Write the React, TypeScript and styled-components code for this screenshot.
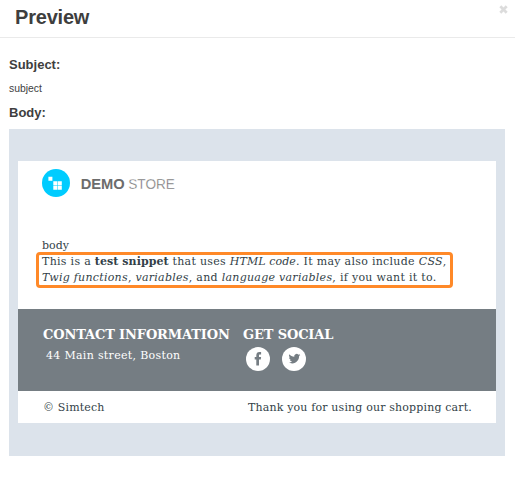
import React from "react";
import styled, { createGlobalStyle } from "styled-components";

const GlobalStyle = createGlobalStyle`
  * { box-sizing: border-box; }
  body { margin: 0; background: #fff; }
`;

const Dialog = styled.div`
  width: 515px;
  height: 485px;
  overflow: hidden;
  background: #fff;
  color: #3e3e3e;
  font-family: "Liberation Sans", Arial, sans-serif;
`;

const Header = styled.header`
  display: flex;
  justify-content: space-between;
  align-items: flex-start;
  height: 38px;
  padding: 5px 7px 0 15px;
  border-bottom: 1px solid #eaeaea;
`;

const Title = styled.h3`
  margin: 0;
  font-size: 20px;
  line-height: 24px;
  letter-spacing: -0.2px;
`;

const CloseButton = styled.button`
  display: flex;
  padding: 0;
  border: 0;
  background: none;
`;

const Content = styled.main`
  padding: 18px 10px 0 9px;
`;

const Label = styled.h4`
  margin: 0;
  font-size: 13px;
  line-height: 18px;
`;

const Subject = styled.p`
  margin: 6px 0 7px;
  font-size: 10.4px;
  line-height: 17px;
`;

const Canvas = styled.section`
  height: 327px;
  margin-top: 7px;
  padding: 32px 9px 0;
  background: #dce3eb;
`;

const Mail = styled.article`
  background: #fff;
  color: #333f48;
  font-family: "DejaVu Serif", serif;
  font-size: 11px;
  line-height: 16px;
  white-space: nowrap;
`;

const MailTop = styled.div`
  height: 148px;
  padding: 8px 0 0 18px;
`;

const Logo = styled.svg`
  display: block;
  margin-left: 6px;
`;

const BodyText = styled.p`
  margin: 41px 0 0;
  padding-left: 6px;
  line-height: 15px;
`;

const Highlight = styled.p`
  width: 417px;
  height: 36px;
  margin: -1px 0 0;
  padding: 0 3px;
  border: 3px solid #ff8928;
  border-radius: 4px;
  line-height: 16px;
  letter-spacing: 0.3px;
`;

const Line = styled.span`
  display: block;
  &:first-child { margin-top: -1px; }
  b { letter-spacing: 0.07px; }
  i { letter-spacing: 0.27px; }
`;

const Code = styled.i`
  && { letter-spacing: 0.08px; }
`;

const InfoBand = styled.div`
  display: grid;
  grid-template-columns: 200px 1fr;
  height: 82px;
  padding: 17px 0 0 25px;
  background: #757d83;
  color: #fff;
`;

const BandTitle = styled.h5`
  margin: 0;
  font-size: 13px;
  line-height: 18px;
  letter-spacing: -0.13px;
`;

const Address = styled.p`
  margin: 4px 0 0 3px;
  letter-spacing: 0.31px;
`;

const Socials = styled.div`
  display: flex;
  gap: 12px;
  padding: 3px 0 0 3px;
`;

const Footer = styled.footer`
  display: flex;
  justify-content: space-between;
  height: 32px;
  padding: 9px 24px 0 25px;
  letter-spacing: 0.16px;
`;

export default function App() {
  return (
    <Dialog>
      <GlobalStyle />
      <Header>
        <Title>Preview</Title>
        <CloseButton aria-label="Close">
          <svg width="9" height="9" viewBox="0 0 9 9">
            <path d="M1.3 1.3L7.7 7.7M7.7 1.3L1.3 7.7" stroke="#dcdcdc" strokeWidth="2.7" />
          </svg>
        </CloseButton>
      </Header>
      <Content>
        <Label>Subject:</Label>
        <Subject>subject</Subject>
        <Label>Body:</Label>
        <Canvas>
          <Mail>
            <MailTop>
              <Logo width="140" height="28" viewBox="0 0 140 28">
                <circle cx="14" cy="14" r="14" fill="#00ccff" />
                <path
                  d="M6.4 7.7h4v4h-4zM11.3 12.2h4v4h-4zM15.8 12.2h4v4h-4zM11.3 16.7h4v4h-4zM15.8 16.7h4v4h-4z"
                  fill="#fff"
                />
                <text x="38.7" y="20" fontFamily="Liberation Sans" fontSize="15.5" fontWeight="700" fill="#6c6c6c" textLength="44" lengthAdjust="spacingAndGlyphs">DEMO</text>
                <text x="86.2" y="20" fontFamily="Liberation Sans" fontSize="15.5" fill="#6c6c6c" stroke="#fff" strokeWidth=".35" textLength="46.8" lengthAdjust="spacingAndGlyphs">STORE</text>
              </Logo>
              <BodyText>body</BodyText>
              <Highlight>
                <Line>This is a <b>test snippet</b> that uses <Code>HTML code</Code>. It may also include <i>CSS</i>,</Line>
                <Line><i>Twig functions</i>, <i>variables</i>, and <i>language variables</i>, if you want it to.</Line>
              </Highlight>
            </MailTop>
            <InfoBand>
              <div>
                <BandTitle>CONTACT INFORMATION</BandTitle>
                <Address>44 Main street, Boston</Address>
              </div>
              <div>
                <BandTitle>GET SOCIAL</BandTitle>
                <Socials>
                  <svg width="24" height="24" viewBox="0 0 24 24">
                    <circle cx="12" cy="12" r="12" fill="#fff" />
                    <path d="M10.3 18.6V12.6H8.7V10h1.6V8.4c0-2.3 1.2-3.4 3.1-3.4h1.7v2.6h-1.1c-.8 0-1 .4-1 1V10h2.1l-.3 2.6h-1.8v6z" fill="#757d83" />
                  </svg>
                  <svg width="24" height="24" viewBox="0 0 24 24">
                    <circle cx="12" cy="12" r="12" fill="#fff" />
                    <path
                      transform="translate(6.5 5.8) scale(.49)"
                      d="M23.95 4.57a10 10 0 0 1-2.82.77 4.96 4.96 0 0 0 2.16-2.72c-.95.55-2 .96-3.13 1.18a4.92 4.92 0 0 0-8.38 4.48C7.69 8.1 4.07 6.13 1.64 3.16a4.92 4.92 0 0 0 1.52 6.57 4.9 4.9 0 0 1-2.23-.61v.06a4.92 4.92 0 0 0 3.95 4.83 5 5 0 0 1-2.21.08 4.94 4.94 0 0 0 4.6 3.42A9.87 9.87 0 0 1 0 19.54a13.99 13.99 0 0 0 7.55 2.21c9.05 0 14-7.5 14-13.98 0-.21 0-.42-.02-.63a9.94 9.94 0 0 0 2.42-2.57z"
                      fill="#757d83"
                    />
                  </svg>
                </Socials>
              </div>
            </InfoBand>
            <Footer>
              <span>© Simtech</span>
              <span>Thank you for using our shopping cart.</span>
            </Footer>
          </Mail>
        </Canvas>
      </Content>
    </Dialog>
  );
}
